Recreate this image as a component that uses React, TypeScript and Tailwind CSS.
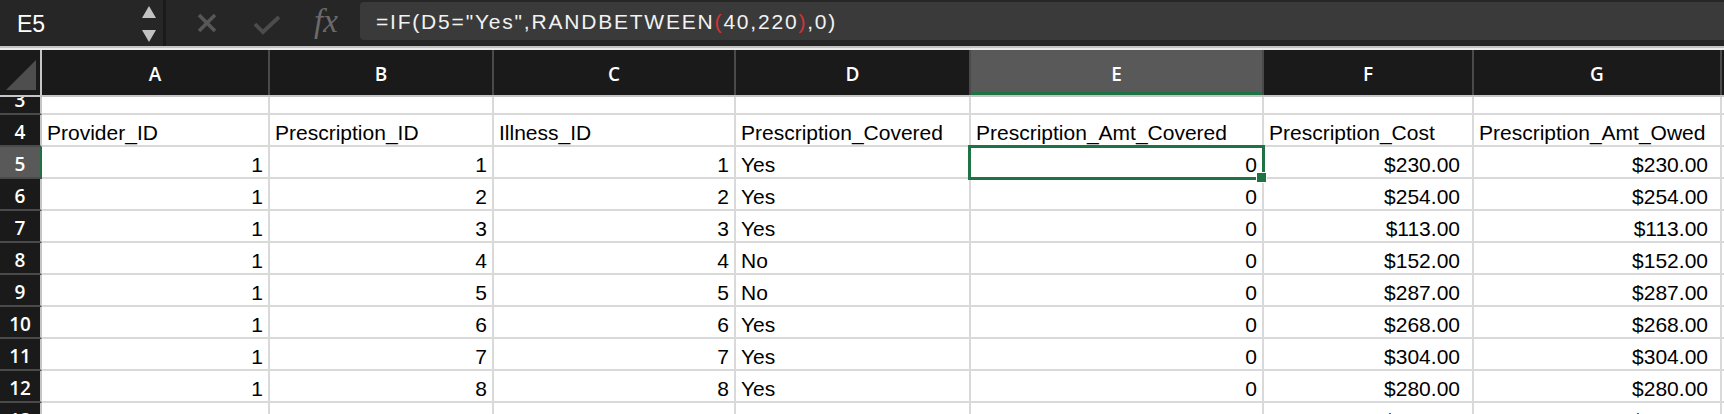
import React from "react";

const colW = ["w-[228px]", "w-[224px]", "w-[242px]", "w-[235px]", "w-[293px]", "w-[210px]", "w-[248px]"];
const letters = ["A", "B", "C", "D", "E", "F", "G"];

const headers = ["Provider_ID", "Prescription_ID", "Illness_ID", "Prescription_Covered", "Prescription_Amt_Covered", "Prescription_Cost", "Prescription_Amt_Owed"];

const data: string[][] = [
  ["1", "1", "1", "Yes", "0", "$230.00", "$230.00"],
  ["1", "2", "2", "Yes", "0", "$254.00", "$254.00"],
  ["1", "3", "3", "Yes", "0", "$113.00", "$113.00"],
  ["1", "4", "4", "No", "0", "$152.00", "$152.00"],
  ["1", "5", "5", "No", "0", "$287.00", "$287.00"],
  ["1", "6", "6", "Yes", "0", "$268.00", "$268.00"],
  ["1", "7", "7", "Yes", "0", "$304.00", "$304.00"],
  ["1", "8", "8", "Yes", "0", "$280.00", "$280.00"],
  ["1", "9", "9", "Yes", "0", "$162.00", "$162.00"],
];

const align = ["right", "right", "right", "left", "right", "money", "money"];

const hdrFont = { fontFamily: '"Open Sans", "Liberation Sans", sans-serif' };

function cellPad(i: number) {
  const a = align[i];
  if (a === "left") return "justify-start pl-[5px]";
  if (a === "money") return "justify-end pr-[12px]";
  return "justify-end pr-[5px]";
}

function DataRow({ n, cells, header, selected }: { n: number; cells: string[]; header?: boolean; selected?: boolean }) {
  return (
    <div className="flex h-[32px] shrink-0">
      <div
        className={
          "w-[42px] shrink-0 flex items-end justify-center border-b-2 border-b-[#4a4a4a] border-r-2 text-white " +
          (selected ? "bg-[#595959] border-r-[#1f7244]" : "bg-[#1a1a1a] border-r-[#c6c6c6]")
        }
      >
        <span className="leading-[25px] text-[19px] font-semibold" style={hdrFont}>
          {n}
        </span>
      </div>
      {cells.map((c, i) => (
        <div
          key={i}
          className={
            colW[i] +
            " shrink-0 relative flex items-end border-b-2 border-r-2 border-[#d9d9d9] " +
            (header ? "justify-start pl-[5px]" : cellPad(i))
          }
        >
          <span className="leading-[24px] whitespace-nowrap">{c}</span>
          {selected && i === 4 && (
            <>
              <div className="absolute -top-[2px] -left-[3px] -right-[3px] -bottom-[3px] border-[3px] border-[#1f7244] z-10 pointer-events-none" />
              <div className="absolute -right-[5px] -bottom-[6px] w-[11px] h-[11px] bg-[#1f7244] border border-white z-20" />
            </>
          )}
        </div>
      ))}
      <div className="flex-1 border-b-2 border-[#d9d9d9]" />
    </div>
  );
}

export default function App() {
  return (
    <div
      className="w-[1724px] h-[414px] overflow-hidden bg-white flex flex-col text-[21px] text-black"
      style={{ fontFamily: '"Liberation Sans", Arial, sans-serif' }}
    >
      {/* Formula bar */}
      <div className="h-[46px] shrink-0 bg-[#262626] flex">
        <div className="w-[163px] shrink-0 flex items-center justify-between">
          <span className="pl-[17px] text-white text-[23px] leading-none mt-[2px]">E5</span>
          <svg width="16" height="40" viewBox="0 0 16 40" className="mr-[6px]">
            <polygon points="1,15 15,15 8,3" fill="#c2c2c2" />
            <polygon points="1,27 15,27 8,39" fill="#c2c2c2" />
          </svg>
        </div>
        <div className="w-[3px] shrink-0 bg-[#1b1b1b]" />
        <div className="flex items-center">
          <svg width="20" height="20" viewBox="0 0 20 20" className="ml-[31px]">
            <line x1="2" y1="2" x2="18" y2="18" stroke="#575757" strokeWidth="3.5" />
            <line x1="18" y1="2" x2="2" y2="18" stroke="#575757" strokeWidth="3.5" />
          </svg>
          <svg width="28" height="22" viewBox="0 0 28 22" className="ml-[36px] mt-[4px]">
            <polyline points="2,10 10,18 26,3" fill="none" stroke="#4c4c4c" strokeWidth="3.8" />
          </svg>
          <span
            className="ml-[33px] w-[32px] text-[33px] italic text-[#6b6b6b] leading-none -mt-[3px]"
            style={{ fontFamily: '"Liberation Serif", "Times New Roman", serif' }}
          >
            fx
          </span>
        </div>
        <div className="ml-[14px] flex-1 mt-[2px] h-[38px] bg-[#3a3a3a] rounded-l-[4px] flex items-center pl-[16px]">
          <span className="text-[#f2f2f2] text-[21px] tracking-[1.8px] whitespace-nowrap leading-none">
            =IF(D5="Yes",RANDBETWEEN<span className="text-[#d13438]">(</span>40,220<span className="text-[#d13438]">)</span>,0)
          </span>
        </div>
      </div>
      <div className="h-[2px] shrink-0 bg-[#c4c4c4]" />
      <div className="h-[2px] shrink-0 bg-[#ececec]" />

      {/* Column header */}
      <div className="h-[47px] shrink-0 flex bg-[#1a1a1a] border-b-2 border-[#c6c6c6]">
        <div className="w-[42px] shrink-0 border-r-2 border-[#c6c6c6] flex items-end justify-end">
          <svg width="40" height="45" viewBox="0 0 40 45">
            <polygon points="36,10 36,40 6,40" fill="#4e4e4e" />
          </svg>
        </div>
        {letters.map((l, i) => (
          <div
            key={l}
            className={
              colW[i] +
              " shrink-0 flex items-center justify-center border-r-2 border-[#4a4a4a] text-white text-[19px] font-semibold pt-[3px] " +
              (l === "E" ? "bg-[#595959] shadow-[inset_0_-3px_0_#1f7244]" : "")
            }
            style={hdrFont}
          >
            {l}
          </div>
        ))}
        <div className="flex-1" />
      </div>

      {/* Row 3 (scrolled, partially visible) */}
      <div className="h-[18px] shrink-0 overflow-hidden flex flex-col justify-end">
        <DataRow n={3} cells={["", "", "", "", "", "", ""]} header />
      </div>
      <DataRow n={4} cells={headers} header />
      {data.map((r, i) => (
        <DataRow key={i} n={i + 5} cells={r} selected={i === 0} />
      ))}
    </div>
  );
}
